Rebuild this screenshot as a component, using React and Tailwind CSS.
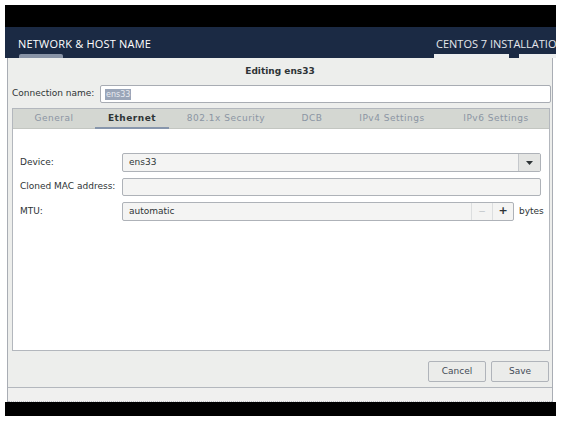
export default function App() {
  const tabs = [
    { label: "General", w: "w-[82px]" },
    { label: "Ethernet", w: "w-[74px]", active: true },
    { label: "802.1x Security", w: "w-[114px]" },
    { label: "DCB", w: "w-[58px]" },
    { label: "IPv4 Settings", w: "w-[102px]" },
    { label: "IPv6 Settings", w: "w-[106px]" },
  ];
  return (
    <div className="w-[562px] h-[426px] bg-white pt-[5px] overflow-hidden" style={{ fontFamily: '"DejaVu Sans", sans-serif' }}>
      <div className="ml-[5px] w-[551px]">
        <div className="h-[22px] bg-black" />
        <div className="h-[31px] bg-[#1b2a44] flex flex-col">
          <div className="flex flex-1 items-center justify-between pl-[13px] pt-[7px]" style={{ fontFamily: '"Open Sans", sans-serif' }}>
            <span className="text-[11px] text-white tracking-[0.2px]">NETWORK &amp; HOST NAME</span>
            <span className="text-[11px] text-[#e4e7ec] whitespace-nowrap overflow-hidden w-[120px]">CENTOS 7 INSTALLATIO</span>
          </div>
          <div className="flex h-[4px]">
            <div className="ml-[14px] w-[44px] bg-[#8893a6] rounded-t-[2px]" />
            <div className="ml-[371px] w-[75px] bg-[#eceeef]" />
            <div className="ml-[10px] flex-1 bg-[#eceeef]" />
          </div>
        </div>
        <div className="flex h-[344px]">
          <div className="w-[2px]" />
          <div className="w-[546px] bg-[#f0f0ef] border-l border-r border-[#a9adb4] flex flex-col">
            <div className="h-[330px] border-b border-[#b3b7bd] bg-[#edeeec] flex flex-col">
              <div className="h-[26px] flex items-center justify-center pt-[2px] text-[9px] font-bold text-[#2e3436]">Editing ens33</div>
              <div className="flex items-center h-[20px] pl-[4px] pr-[1px]">
                <span className="w-[88px] text-[9px] text-[#2e3436]">Connection name:</span>
                <div className="flex-1 h-[18px] bg-white border border-[#a8acb3] rounded-[2px] flex items-center pl-[4px]">
                  <span className="bg-[#9aa5b8] text-[#e8ebf0] text-[8px] px-[1px] leading-[11px]">ens33</span>
                </div>
              </div>
              <div className="mt-[4px] ml-[4px] mr-[2px] h-[243px] border border-[#b3b7bd] flex flex-col">
                <div className="h-[20px] bg-[#d4d7d2] flex items-stretch border-b border-[#c3c6c1]">
                  {tabs.map((t) => (
                    <div key={t.label} className={`${t.w} flex items-center justify-center relative`}>
                      <span className={`text-[9px] tracking-[0.5px] ${t.active ? "font-bold text-[#2e3436]" : "text-[#8b95a3]"}`}>{t.label}</span>
                      {t.active && <div className="absolute bottom-[-1px] left-0 right-0 h-[2px] bg-[#8796ac]" />}
                    </div>
                  ))}
                </div>
                <div className="flex-1 bg-white flex flex-col pt-[24px] pl-[7px] pr-[8px] gap-[6px] text-[9px] text-[#2e3436]">
                  <div className="flex items-center h-[19px]">
                    <span className="w-[102px]">Device:</span>
                    <div className="flex-1 h-[19px] border border-[#aeb2b8] rounded-[2px] bg-[#f4f4f3] flex">
                      <span className="flex-1 flex items-center pl-[6px]">ens33</span>
                      <div className="w-[22px] border-l border-[#c5c8cc] bg-[#e4e5e3] flex items-center justify-center">
                        <svg width="7" height="4" viewBox="0 0 7 4"><path d="M0 0 L7 0 L3.5 4 Z" fill="#2e3436" /></svg>
                      </div>
                    </div>
                  </div>
                  <div className="flex items-center h-[18px]">
                    <span className="w-[102px]">Cloned MAC address:</span>
                    <div className="flex-1 h-[18px] border border-[#aeb2b8] rounded-[2px] bg-[#f4f4f3]" />
                  </div>
                  <div className="flex items-center h-[19px]">
                    <span className="w-[102px]">MTU:</span>
                    <div className="flex-1 h-[19px] border border-[#aeb2b8] rounded-[2px] bg-[#f4f4f3] flex">
                      <span className="flex-1 flex items-center pl-[6px]">automatic</span>
                      <div className="w-[21px] border-l border-[#dcdedf] flex items-center justify-center text-[#c0c4c8]">−</div>
                      <div className="w-[21px] border-l border-[#dcdedf] flex items-center justify-center font-bold text-[11px]">+</div>
                    </div>
                    <span className="ml-[5px] w-[22px]">bytes</span>
                  </div>
                </div>
              </div>
              <div className="flex justify-end gap-[5px] mt-[10px] pr-[3px]">
                <div className="w-[58px] h-[21px] border border-[#b0b4ba] rounded-[2px] bg-[#ebecea] flex items-center justify-center text-[9px] text-[#444b57]">Cancel</div>
                <div className="w-[58px] h-[21px] border border-[#b0b4ba] rounded-[2px] bg-[#ebecea] flex items-center justify-center text-[9px] text-[#444b57]">Save</div>
              </div>
            </div>
            <div className="flex-1 border-b border-dotted border-[#b9bcc2]" />
          </div>
        </div>
        <div className="h-[14px] bg-black" />
      </div>
    </div>
  );
}
